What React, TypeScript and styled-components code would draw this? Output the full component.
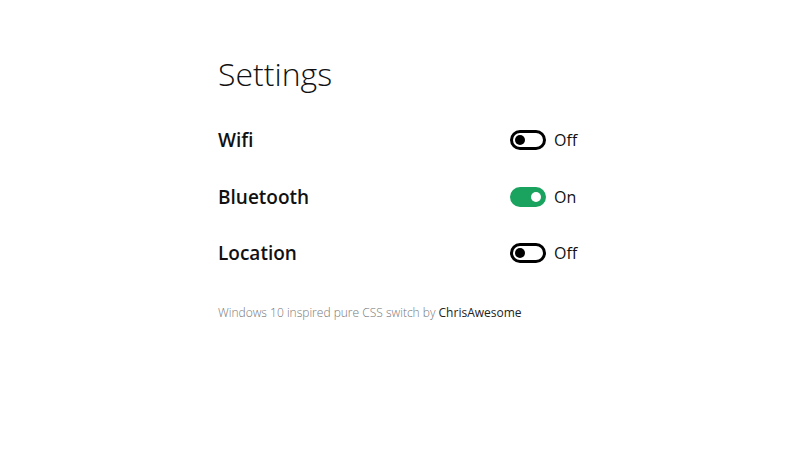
import React, { useState } from 'react'
import styled, { createGlobalStyle } from 'styled-components'

const GlobalStyle = createGlobalStyle`
  body {
    margin: 0;
    background: #fff;
    font-family: "Open Sans", "Noto Sans", sans-serif;
    color: #111;
  }
`

const Page = styled.div`
  width: 364px;
  margin: 0 auto;
  padding-top: 50px;
`

const Title = styled.h1`
  font-size: 32px;
  font-weight: 300;
  margin: 0 0 14px 0;
  line-height: 48px;
  color: #111;
`

const Row = styled.div`
  display: flex;
  align-items: center;
  justify-content: space-between;
  height: 56.5px;
`

const Label = styled.span`
  font-size: 19px;
  font-weight: 600;
  color: #111;
`

const SwitchGroup = styled.label`
  display: flex;
  align-items: center;
  gap: 8px;
  width: 72px;
  cursor: pointer;
`

const Track = styled.span<{ $on: boolean }>`
  box-sizing: border-box;
  width: 36px;
  height: 20px;
  border-radius: 10px;
  border: 3px solid ${(p) => (p.$on ? '#1aa35f' : '#000')};
  background: ${(p) => (p.$on ? '#1aa35f' : '#fff')};
  display: flex;
  align-items: center;
  justify-content: ${(p) => (p.$on ? 'flex-end' : 'flex-start')};
  padding: 0 2px;
`

const Knob = styled.span<{ $on: boolean }>`
  width: 10px;
  height: 10px;
  border-radius: 50%;
  background: ${(p) => (p.$on ? '#fff' : '#000')};
`

const State = styled.span`
  font-size: 16px;
  color: #111;
`

const Footer = styled.p`
  margin: 22px 0 0 0;
  font-size: 12px;
  font-weight: 300;
  color: #777;
`

const Author = styled.span`
  color: #222;
  font-weight: 400;
`

const settings = [
  { name: 'Wifi', on: false },
  { name: 'Bluetooth', on: true },
  { name: 'Location', on: false },
]

export default function App() {
  const [values, setValues] = useState(settings.map((s) => s.on))

  return (
    <>
      <GlobalStyle />
      <Page>
        <Title>Settings</Title>
        {settings.map((s, idx) => (
          <Row key={s.name}>
            <Label>{s.name}</Label>
            <SwitchGroup
              onClick={() => setValues(values.map((v, i) => (i === idx ? !v : v)))}
            >
              <Track $on={values[idx]}>
                <Knob $on={values[idx]} />
              </Track>
              <State>{values[idx] ? 'On' : 'Off'}</State>
            </SwitchGroup>
          </Row>
        ))}
        <Footer>
          Windows 10 inspired pure CSS switch by <Author>ChrisAwesome</Author>
        </Footer>
      </Page>
    </>
  )
}
